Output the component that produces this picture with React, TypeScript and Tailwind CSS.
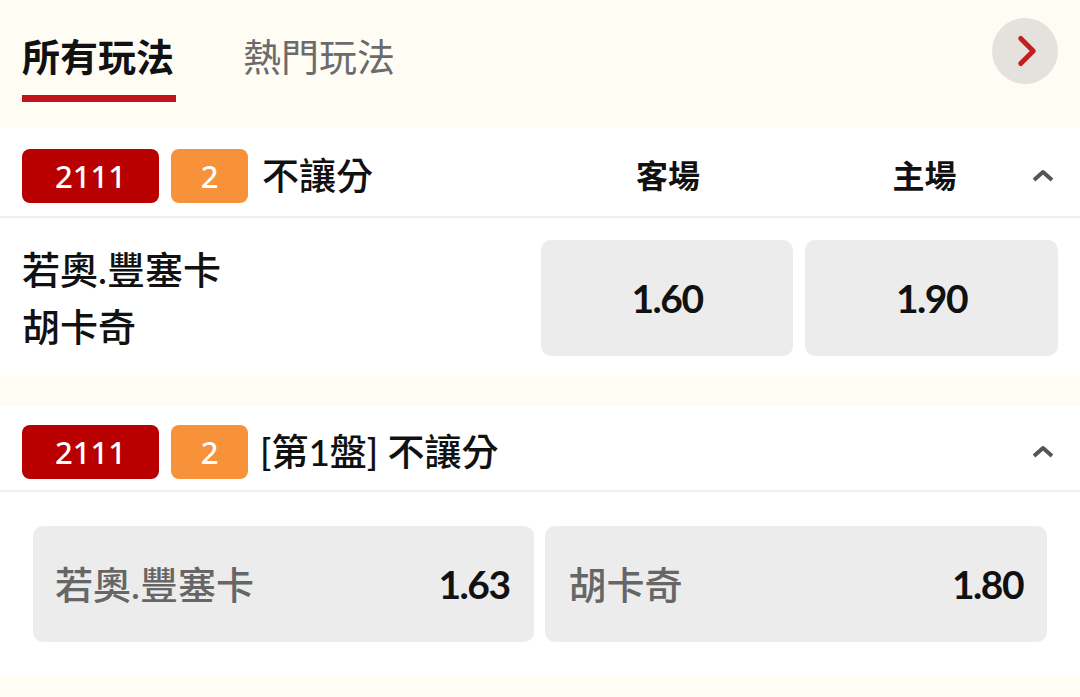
import { ChevronRight } from "lucide-react";

const font = { fontFamily: "Lato, 'Noto Sans CJK TC', sans-serif" };

const Badges: React.FC = () => (
  <>
    <span className="flex h-[54px] w-[137px] items-center justify-center rounded-lg bg-[#b80000] font-['Noto_Sans',sans-serif] text-[31px] font-medium text-white">
      2111
    </span>
    <span className="ml-3 flex h-[54px] w-[77px] items-center justify-center rounded-lg bg-[#f7923a] font-['Noto_Sans',sans-serif] text-[31px] font-medium text-white">
      2
    </span>
  </>
);

const Caret: React.FC<{ className?: string }> = ({ className }) => (
  <svg className={className} width="24" height="14" viewBox="0 0 24 14" fill="none">
    <polyline points="3,12 12,4 21,12" stroke="#555" strokeWidth="4" strokeLinejoin="round" />
  </svg>
);

const App: React.FC = () => {
  return (
    <div className="h-[697px] w-[1080px] overflow-hidden bg-[#fffcf4]" style={font}>
      {/* tabs */}
      <div className="flex h-[128px] items-start justify-between pl-[22px] pr-[22px]">
        <div className="flex gap-[67px] pt-[30px]">
          <div className="flex flex-col">
            <span className="text-[38px] font-bold leading-[52px] text-[#111]">所有玩法</span>
            <span className="mt-[13px] h-[7px] w-[154px] bg-[#c0141a]" />
          </div>
          <span className="text-[38px] leading-[52px] text-[#6b6b6b]">熱門玩法</span>
        </div>
        <button className="mt-[18px] flex h-[66px] w-[66px] items-center justify-center rounded-full bg-[#e5e2de]">
          <ChevronRight className="ml-[3px] text-[#c0211f]" size={50} strokeWidth={2.4} />
        </button>
      </div>

      {/* card 1 */}
      <div className="bg-white">
        <div className="flex h-[90px] items-center border-b-2 border-[#efefef] pl-[22px] pr-[22px] pt-[8px]">
          <Badges />
          <span className="ml-[14px] text-[37px] font-medium text-[#111]">不讓分</span>
          <div className="ml-auto flex items-center">
            <span className="w-[252px] text-center text-[32px] font-bold text-[#111]">客場</span>
            <span className="ml-[4px] w-[253px] text-center text-[32px] font-bold text-[#111]">主場</span>
            <Caret className="ml-[-20px] mr-[3px] mt-[-2px]" />
          </div>
        </div>
        <div className="flex items-center pb-[20px] pl-[22px] pr-[22px] pt-[22px]">
          <div className="flex flex-col text-[38px] font-medium leading-[57px] text-[#111]">
            <span>若奧.豐塞卡</span>
            <span>胡卡奇</span>
          </div>
          <div className="ml-auto flex gap-3">
            <div className="flex h-[116px] w-[252px] items-center justify-center rounded-[10px] bg-[#ececec] text-[39px] font-bold tracking-[-1.5px] text-[#111]">
              1.60
            </div>
            <div className="flex h-[116px] w-[253px] items-center justify-center rounded-[10px] bg-[#ececec] text-[39px] font-bold tracking-[-1.5px] text-[#111]">
              1.90
            </div>
          </div>
        </div>
      </div>

      <div className="h-[30px]" />

      {/* card 2 */}
      <div className="bg-white">
        <div className="flex h-[86px] items-center border-b-2 border-[#eff0f3] pl-[22px] pr-[22px] pt-[8px]">
          <Badges />
          <span className="ml-[12px] text-[37px] font-medium text-[#111]">[第1盤] 不讓分</span>
          <Caret className="ml-auto mr-[3px] mt-[-2px]" />
        </div>
        <div className="flex gap-[11px] pb-[34px] pl-[33px] pr-[33px] pt-[34px]">
          <div className="flex h-[116px] flex-1 items-center justify-between rounded-[10px] bg-[#ececec] pl-[22px] pr-[24px]">
            <span className="text-[38px] font-medium text-[#666]">若奧.豐塞卡</span>
            <span className="text-[39px] font-bold tracking-[-1.5px] text-[#111]">1.63</span>
          </div>
          <div className="flex h-[116px] flex-1 items-center justify-between rounded-[10px] bg-[#ececec] pl-[24px] pr-[24px]">
            <span className="text-[38px] font-medium text-[#666]">胡卡奇</span>
            <span className="text-[39px] font-bold tracking-[-1.5px] text-[#111]">1.80</span>
          </div>
        </div>
      </div>
    </div>
  );
};

export default App;
